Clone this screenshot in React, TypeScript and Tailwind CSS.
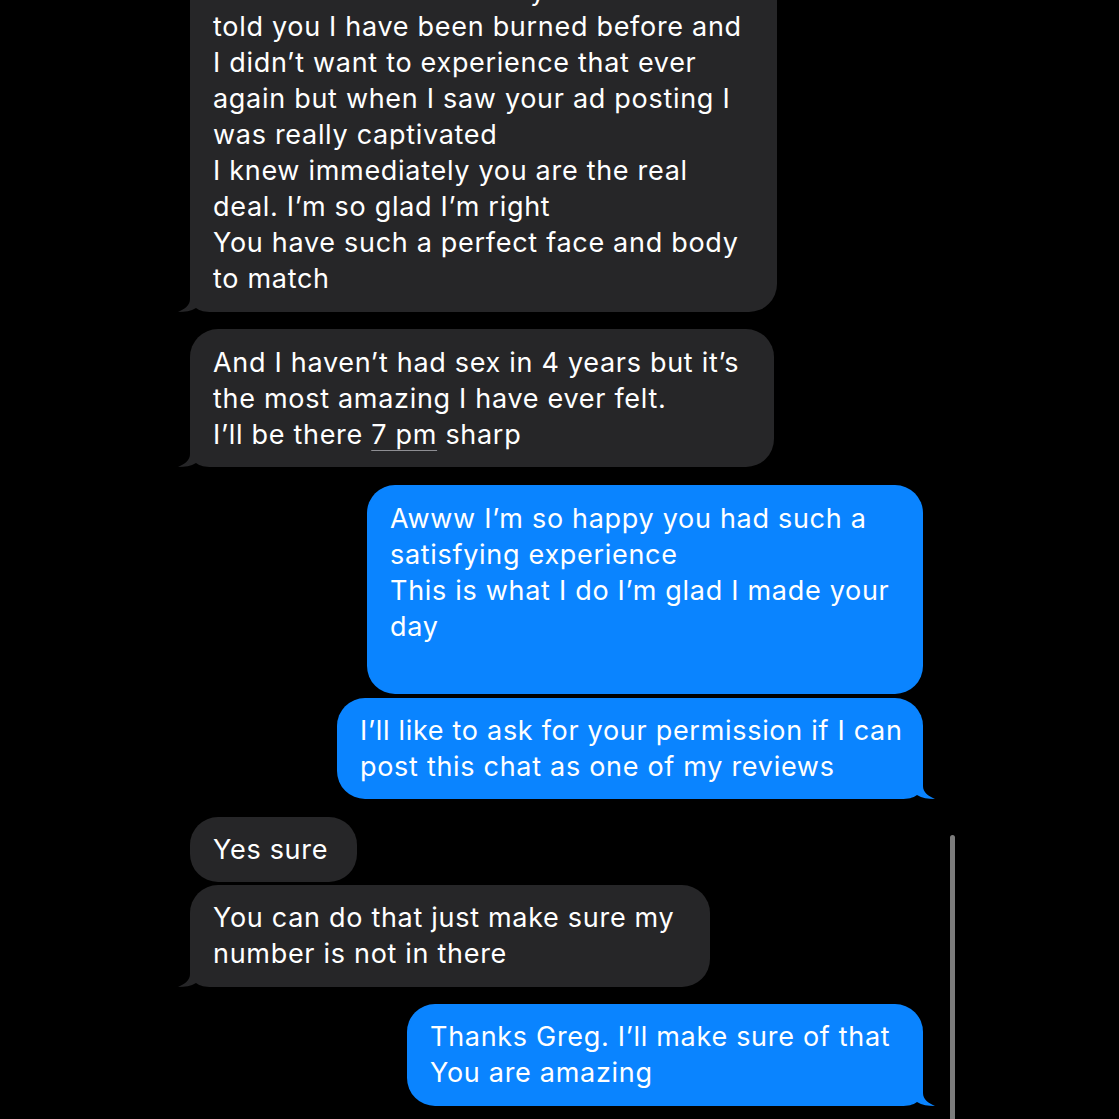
import type { ReactNode } from "react";

type Side = "in" | "out";

interface IMessage {
  side: Side;
  lines: ReactNode[];
  width: string;
  tail?: boolean;
  space: string;
  pad: string;
}

const messages: IMessage[] = [
  {
    side: "in",
    width: "w-[587px]",
    tail: true,
    space: "-mt-[43px]",
    pad: "pt-[16px] pb-[15px]",
    lines: [
      "I was so nervous cos if you remember I",
      "told you I have been burned before and",
      "I didn’t want to experience that ever",
      "again but when I saw your ad posting I",
      "was really captivated",
      "I knew immediately you are the real",
      "deal. I’m so glad I’m right",
      "You have such a perfect face and body",
      "to match",
    ],
  },
  {
    side: "in",
    width: "w-[584px]",
    tail: true,
    space: "mt-[17px]",
    pad: "pt-[16px] pb-[14px]",
    lines: [
      "And I haven’t had sex in 4 years but it’s",
      "the most amazing I have ever felt.",
      <>
        I’ll be there{" "}
        <span className="underline decoration-[#8e8e93] decoration-1 underline-offset-[6px]">
          7 pm
        </span>{" "}
        sharp
      </>,
    ],
  },
  {
    side: "out",
    width: "w-[556px]",
    space: "mt-[18px]",
    pad: "pt-[16px] pb-[13px]",
    lines: [
      "Awww I’m so happy you had such a",
      "satisfying experience",
      "This is what I do I’m glad I made your",
      "day",
      "\u00a0",
    ],
  },
  {
    side: "out",
    width: "w-[586px]",
    tail: true,
    space: "mt-[4px]",
    pad: "pt-[15px] pb-[14px]",
    lines: [
      "I’ll like to ask for your permission if I can",
      "post this chat as one of my reviews",
    ],
  },
  {
    side: "in",
    width: "w-[167px]",
    space: "mt-[18px]",
    pad: "pt-[15px] pb-[14px]",
    lines: ["Yes sure"],
  },
  {
    side: "in",
    width: "w-[520px]",
    tail: true,
    space: "mt-[3px]",
    pad: "pt-[15px] pb-[15px]",
    lines: ["You can do that just make sure my", "number is not in there"],
  },
  {
    side: "out",
    width: "w-[516px]",
    tail: true,
    space: "mt-[17px]",
    pad: "pt-[15px] pb-[15px]",
    lines: ["Thanks Greg. I’ll make sure of that", "You are amazing"],
  },
];

function Tail({ side }: { side: Side }) {
  const color = side === "in" ? "#262628" : "#0a84ff";
  return (
    <svg
      width="40"
      height="30"
      viewBox="0 0 40 30"
      className={
        side === "in"
          ? "absolute -left-[12px] bottom-0"
          : "absolute -right-[12px] bottom-0 -scale-x-100"
      }
    >
      <path
        d="M12 0 L12 17 C12 23 7 27 0 30 C7 30 13 29 18 26 C22 29 27 30 34 30 L40 30 L40 0 Z"
        fill={color}
      />
    </svg>
  );
}

function Bubble({ side, lines, width, tail, space, pad }: IMessage) {
  return (
    <div
      className={`relative ${width} ${space} ${
        side === "in" ? "self-start bg-[#262628]" : "self-end bg-[#0a84ff]"
      } rounded-[28px]`}
    >
      {tail && <Tail side={side} />}
      <div className={`relative px-[23px] ${pad}`}>
        {lines.map((line, idx) => (
          <p key={idx} className="whitespace-nowrap">
            {line}
          </p>
        ))}
      </div>
    </div>
  );
}

export default function App() {
  return (
    <div className="relative h-[1119px] w-full overflow-hidden bg-black font-['Inter','Liberation_Sans',sans-serif] text-[27px] leading-[36px] tracking-[0.7px] text-white">
      <div className="flex flex-col pl-[190px] pr-[196px]">
        {messages.map((m, idx) => (
          <Bubble key={idx} {...m} />
        ))}
      </div>

      {/* scroll indicator */}
      <div className="absolute left-[950px] top-[835px] h-[300px] w-[5px] rounded-full bg-[#7c7c7c]" />
    </div>
  );
}
